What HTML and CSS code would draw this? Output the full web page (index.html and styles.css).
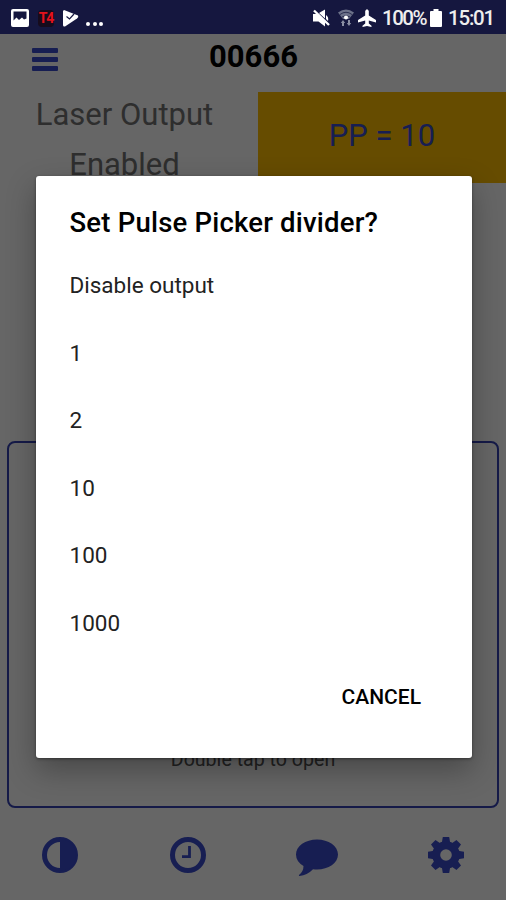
FILE: index.html
```html
<!DOCTYPE html>
<html>

<head>
	<meta charset="utf-8">
	<title>00666</title>
	<link rel="stylesheet" href="styles.css">
</head>

<body>
	<div class="statusbar">
		<svg class="ic-picture" width="18" height="18" viewBox="0 0 18 18">
			<path fill="#fff" fill-rule="evenodd" d="M2 0h14a2 2 0 0 1 2 2v14a2 2 0 0 1-2 2H2a2 2 0 0 1-2-2V2a2 2 0 0 1 2-2zM2.500 2.500v9l3-3 2.500 2.500 3-2.500 2 2 2.500-1V2.500z"/>
		</svg>
		<span class="t4">T4</span>
		<svg class="ic-play" width="16" height="17" viewBox="0 0 16 17">
			<path fill="#fff" d="M1 0L15 5.500Q16 7 14 8.500L2 16.500Q0 17 0 15V1z"/>
			<path fill="none" stroke="#15173f" stroke-width="1.200" d="M3.500 6.500l3 2.500 4.500-5"/>
		</svg>
		<span class="dots"><i></i><i></i><i></i></span>
		<div class="status-right">
			<svg class="ic-mute" width="17" height="18" viewBox="0 0 17 18">
				<path fill="#fff" d="M0 5h4l8 8v4.500L5.500 12.500H0zM6 4L12 .5v9zM13 6q3 2 2 6l-2-2z"/>
				<path fill="none" stroke="#fff" stroke-width="2.400" d="M1 1.500l15 14.500"/>
			</svg>
			<svg class="ic-wifi" width="16" height="18" viewBox="0 0 16 18">
				<path fill="#6c7189" d="M0 3.500Q8-2.500 16 3.500L11 10H5z"/>
				<path fill="none" stroke="#2b2f50" stroke-width="1" d="M2 5.500q6-4.500 12 0M4 8q4-3 8 0"/>
				<circle cx="8" cy="8.500" r="2" fill="#fff"/>
				<path fill="#8b8fa3" d="M4 17v-3H2.800L5 11l2.200 3H6v3zM10 11v3H8.800l2.200 3 2.200-3H12v-3z"/>
			</svg>
			<svg class="ic-plane" width="18" height="18" viewBox="0 0 18 18">
				<path fill="#fff" d="M7.200 2q1.800-3.500 3.600 0v4.500L18 11v2.500L10.800 11.500v3L13.500 16.700V18L9 17l-4.500 1v-1.300L7.200 14.500v-3L0 13.500V11L7.200 6.500z"/>
			</svg>
			<span class="battery-text">100%</span>
			<svg class="ic-battery" width="12" height="18" viewBox="0 0 12 18">
				<path fill="#fff" d="M3.500 0h5v2H11q1 0 1 1v14q0 1-1 1H1q-1 0-1-1V3q0-1 1-1h2.500z"/>
			</svg>
			<span class="clock">15:01</span>
		</div>
	</div>

	<div class="page">
		<div class="header">
			<div class="menu"><i></i><i></i><i></i></div>
			<div class="device">00666</div>
		</div>
		<div class="tiles">
			<div class="tile laser">Laser Output<br>Enabled</div>
			<div class="tile picker">PP = 10</div>
		</div>
		<div class="panel">
			<div class="hint">Double tap to open</div>
		</div>
		<div class="tabs">
			<svg width="36" height="36" viewBox="0 0 36 36">
				<circle cx="18" cy="18" r="15.500" fill="none" stroke="#3a4bcd" stroke-width="5"/>
				<path fill="#3a4bcd" d="M18 2a16 16 0 0 1 0 32z"/>
			</svg>
			<svg class="ic-clock" width="36" height="36" viewBox="0 0 36 36">
				<circle cx="18" cy="18" r="15.500" fill="none" stroke="#3a4bcd" stroke-width="5"/>
				<path fill="none" stroke="#3a4bcd" stroke-width="2.800" d="M19.500 9v10.600h-7.500"/>
			</svg>
			<svg width="42" height="36" viewBox="0 0 42 36">
				<path fill="#3a4bcd" d="M21 2.500C32.500 2.500 42 9 42 17.500S32.500 32.500 21 32.500q-2 0-4-.3Q11.500 38 3.500 39q-1 0-.5-1Q7.500 34.500 7.500 29 0 24.500 0 17.500C0 9 9.500 2.500 21 2.500z"/>
			</svg>
			<svg width="36" height="36" viewBox="-18 -18 36 36">
				<defs>
					<path id="tooth" d="M-4.200-12L-3.200-18H3.200L4.200-12z"/>
				</defs>
				<g fill="#3a4bcd">
					<circle r="9.800" fill="none" stroke="#3a4bcd" stroke-width="8"/>
					<use href="#tooth"/>
					<use href="#tooth" transform="rotate(45)"/>
					<use href="#tooth" transform="rotate(90)"/>
					<use href="#tooth" transform="rotate(135)"/>
					<use href="#tooth" transform="rotate(180)"/>
					<use href="#tooth" transform="rotate(225)"/>
					<use href="#tooth" transform="rotate(270)"/>
					<use href="#tooth" transform="rotate(315)"/>
				</g>
			</svg>
		</div>
	</div>

	<div class="overlay">
		<div class="dialog">
			<div class="title">Set Pulse Picker divider?</div>
			<ul class="options">
				<li>Disable output</li>
				<li>1</li>
				<li>2</li>
				<li>10</li>
				<li>100</li>
				<li>1000</li>
			</ul>
			<div class="actions"><button type="button">CANCEL</button></div>
		</div>
	</div>
</body>

</html>
```
FILE: styles.css
```css
* { box-sizing: border-box; }
body { margin: 0; height: 900px; overflow: hidden; background: #fff; font-family: Roboto, "Liberation Sans", sans-serif; }
svg { display: block; flex: none; overflow: visible; }

.statusbar { display: flex; align-items: center; height: 34px; padding: 2px 12px 0 11px; background: #15173f; color: #eee; }
.t4 { width: 16px; height: 17px; margin-left: 9px; border-radius: 4px; background: #160b1c; color: #e3121b; font: bold 14px/17px Roboto, sans-serif; text-align: center; letter-spacing: -1px; }
.ic-play { margin-left: 9px; }
.dots { display: flex; gap: 2.500px; margin: 12px 0 0 7px; }
.dots i { width: 4px; height: 4px; border-radius: 2px; background: #fff; }
.status-right { display: flex; align-items: center; margin-left: auto; font-size: 20.500px; font-weight: 500; }
.ic-mute { margin-right: -1px; }
.ic-wifi { margin-left: 9px; }
.ic-plane { margin-left: 4px; }
.battery-text { width: 45px; margin-left: 6px; letter-spacing: -1.500px; }
.ic-battery { margin-left: 3px; }
.clock { width: 46px; margin-left: 6px; letter-spacing: -1.200px; }

.page { height: 866px; }
.header { display: flex; height: 58px; padding-left: 32px; }
.menu { display: flex; flex-direction: column; gap: 4px; width: 26px; padding-top: 14px; }
.menu i { height: 5px; border-radius: 1px; background: #3a4bcd; }
.device { flex: 1; padding: 5px 57px 0 0; text-align: center; font-size: 31px; line-height: 36px; font-weight: bold; }

.tiles { display: flex; height: 91px; }
.tile { font-size: 31px; text-align: center; }
.laser { width: 258px; padding: 0 9px 0 0; margin-top: -2px; line-height: 50px; color: #737373; }
.picker { flex: 1; line-height: 87px; background: #ffbf00; color: #3a4bcd; }

.panel { display: flex; flex-direction: column; justify-content: flex-end; height: 367px; margin: 258px 7px 0 7px; padding-bottom: 35px; border: 2px solid #3543b4; border-radius: 8px; }
.hint { font-size: 19.600px; line-height: 22px; text-align: center; color: #555; }

.tabs { display: flex; justify-content: space-between; padding: 29px 42px 0; }
.ic-clock { margin-left: 2px; }

.overlay { position: absolute; top: 34px; left: 0; width: 506px; height: 866px; padding: 142px 34px 0 36px; background: rgba(0, 0, 0, .6); }
.dialog { height: 582px; padding: 27px 34px 0 33.500px; border-radius: 3px; background: #fff; box-shadow: 0 12px 30px rgba(0, 0, 0, .3), 0 1px 3px rgba(0, 0, 0, .4); }
.title { font-size: 27.500px; line-height: 40px; font-weight: 500; letter-spacing: .2px; white-space: nowrap; color: #000; }
.options { margin: 9px 0 0; padding: 0; list-style: none; }
.options li { height: 67.500px; font-size: 22.500px; line-height: 67.500px; color: #222; }
.actions { display: flex; justify-content: flex-end; padding: 27px 17px 0 0; }
.actions button { padding: 0; border: 0; background: none; color: #000; font: 500 21px/26px Roboto, sans-serif; }
```
